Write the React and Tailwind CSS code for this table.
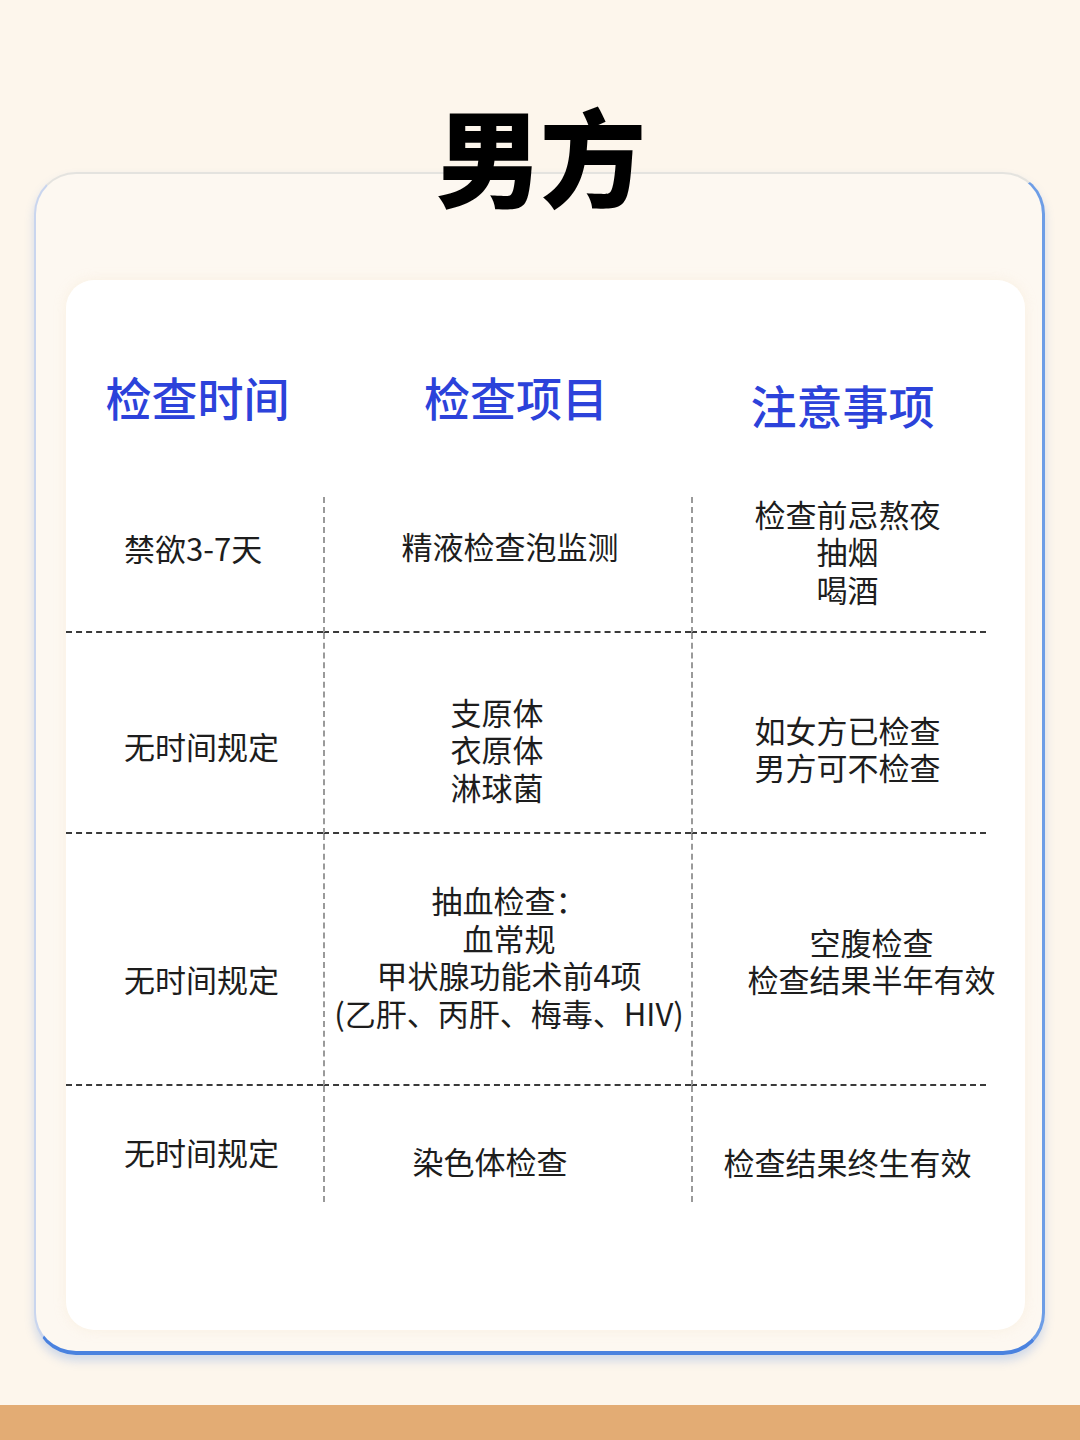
import React from "react";

const HEAD = "text-[46px] leading-[46px] font-medium text-[#2c42da] text-center whitespace-nowrap";

// one row of the table; each cell is [text lines, extra classes]
const ROWS = [
  {
    h: "h-[136px]",
    line: true,
    cells: [
      [["禁欲3-7天"], "pb-[26px]"],
      [["精液检查泡监测"], "pb-[30px] pl-[4px]"],
      [["检查前忌熬夜", "抽烟", "喝酒"], "pb-[20px] pl-[16px]"],
    ],
  },
  {
    h: "h-[201px]",
    line: true,
    cells: [
      [["无时间规定"], "pt-[33px]"],
      [["支原体", "衣原体", "淋球菌"], "pt-[39px] pr-[22px]"],
      [["如女方已检查", "男方可不检查"], "pt-[37px] pl-[16px]"],
    ],
  },
  {
    h: "h-[252px]",
    line: true,
    cells: [
      [["无时间规定"], "pt-[46px]"],
      [["抽血检查：", "血常规", "甲状腺功能术前4项", "(乙肝、丙肝、梅毒、HIV)"], "pl-[2px]"],
      [["空腹检查", "检查结果半年有效"], "pt-[8px] pl-[64px]"],
    ],
  },
  {
    h: "h-[116px]",
    line: false,
    cells: [
      [["无时间规定"], "pt-[22px]"],
      [["染色体检查"], "pt-[40px] pr-[36px]"],
      [["检查结果终生有效"], "pt-[42px] pl-[16px]"],
    ],
  },
];

function Cell({ lines, cls, col, line }) {
  const align = col === 0 ? "justify-start pl-[58px]" : "justify-center";
  const vLine = col === 0 ? "" : "border-l-2 border-dashed border-l-[#9a9a9a]";
  const hLine = line ? "border-b-2 border-dashed border-b-[#3a3a3a]" : "";
  return (
    <div className={`flex items-center ${align} ${vLine} ${hLine} ${cls}`}>
      <div className="pb-[6px] text-[31px] leading-[37.5px] text-[#1d1d1d] text-center whitespace-nowrap">
        {lines.map((t) => (
          <div key={t}>{t}</div>
        ))}
      </div>
    </div>
  );
}

export default function App() {
  return (
    <div className="w-[1080px] h-[1440px] bg-[#fdf6ec] flex flex-col font-['Noto_Sans_CJK_SC','Noto_Sans',sans-serif]">
      {/* Title sits over the card's top edge */}
      <h1 className="relative z-10 mt-[100px] -mb-[34px] text-center text-[106px] leading-none font-black text-black tracking-[-2px]">
        男方
      </h1>

      <div className="ml-[34px] w-[1011px] h-[1183px] rounded-[42px] bg-[#fdf8f1] border-2 border-[#e4e3df] border-l-[#c9d5ee] border-r-[3px] border-r-[#6d9de6] border-b-[4px] border-b-[#4a82df] shadow-[0_6px_10px_rgba(74,130,223,0.25)] flex flex-col">
        <div className="mt-[106px] ml-[30px] w-[959px] h-[1050px] rounded-[28px] bg-white shadow-[0_0_12px_rgba(250,236,220,0.7)] flex flex-col">
          {/* Column headers */}
          <div className="mt-[93px] grid grid-cols-[257px_368px_295px]">
            <div className={`${HEAD} pl-[6px]`}>检查时间</div>
            <div className={`${HEAD} pl-[18px]`}>检查项目</div>
            <div className={`${HEAD} pl-[8px] mt-[8px]`}>注意事项</div>
          </div>

          {/* Table */}
          <div className="mt-[70px] grid grid-cols-[257px_368px_295px]">
            {ROWS.map((r, ri) =>
              r.cells.map(([lines, cls], ci) => (
                <div key={`${ri}-${ci}`} className={`${r.h} flex`}>
                  <Cell lines={lines} cls={`${cls} w-full`} col={ci} line={r.line} />
                </div>
              ))
            )}
          </div>
        </div>
      </div>

      <div className="mt-auto h-[35px] bg-[#e3ac74]" />
    </div>
  );
}
